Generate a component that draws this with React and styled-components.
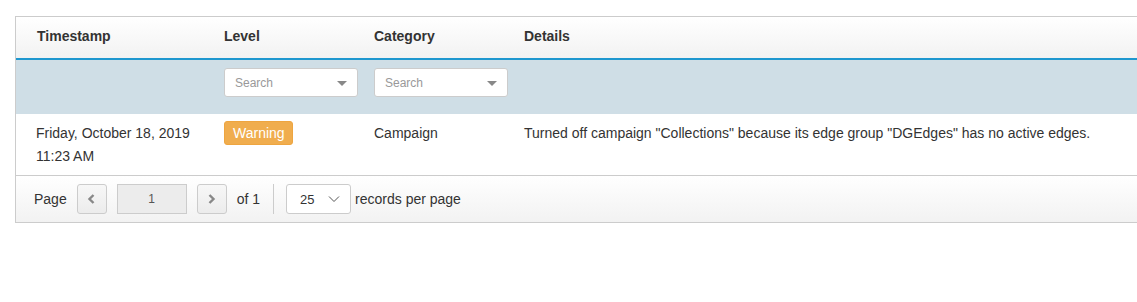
import styled, { createGlobalStyle } from 'styled-components';

const GlobalStyle = createGlobalStyle`
  html, body {
    margin: 0;
    padding: 0;
    overflow: hidden;
    background: #fff;
  }
  body {
    padding: 16px 0 0 15px;
    font-family: 'Liberation Sans', Arial, sans-serif;
    color: #333;
  }
`;

const COLS = '208px 150px 150px 1fr';

const Grid = styled.div`
  width: 1140px;
  border: 1px solid #ccc;
  border-right: none;
  font-size: 14px;
`;

const HeaderRow = styled.div`
  display: grid;
  grid-template-columns: ${COLS};
  height: 41px;
  align-items: center;
  background: linear-gradient(#fff, #f2f2f2);
  border-bottom: 2px solid #1e97cf;
`;

const HeaderCell = styled.div`
  font-size: 14px;
  font-weight: bold;
  color: #333;
  padding-left: ${(p) => (p.$first ? '21px' : '0')};
  margin-top: -3px;
`;

const FilterRow = styled.div`
  display: grid;
  grid-template-columns: ${COLS};
  height: 54px;
  box-sizing: border-box;
  padding-top: 8px;
  align-items: start;
  background: #cfdee6;
`;

const FilterBox = styled.div`
  display: flex;
  align-items: center;
  justify-content: space-between;
  box-sizing: border-box;
  width: 134px;
  height: 29px;
  padding: 0 10px 0 10px;
  background: #fff;
  border: 1px solid #ccc;
  border-radius: 3px;
  font-size: 12px;
  color: #999;
`;

const Caret = styled.span`
  width: 0;
  height: 0;
  margin-top: 2px;
  border-left: 5px solid transparent;
  border-right: 5px solid transparent;
  border-top: 5px solid #888;
`;

const DataRow = styled.div`
  display: grid;
  grid-template-columns: ${COLS};
  padding: 8px 0 7px;
  border-bottom: 1px solid #ccc;
  line-height: 23px;
  color: #333;
`;

const Cell = styled.div`
  padding-left: ${(p) => (p.$first ? '20px' : '0')};
`;

const Badge = styled.span`
  display: inline-block;
  height: 24px;
  line-height: 22px;
  margin-top: -1px;
  padding: 0 7px 0 8px;
  box-sizing: border-box;
  vertical-align: top;
  background: #f0ad4e;
  border: 1px solid #eea540;
  border-radius: 3px;
  color: #fff;
  font-size: 14px;
`;

const Pager = styled.div`
  display: flex;
  align-items: center;
  height: 46px;
  padding-left: 18px;
  background: linear-gradient(#fff, #f2f2f2);
  font-size: 14px;
  color: #333;
`;

const Label = styled.span`
  margin-right: ${(p) => p.$mr || '0'};
`;

const NavButton = styled.button`
  display: flex;
  align-items: center;
  justify-content: center;
  box-sizing: border-box;
  width: 30px;
  height: 30px;
  padding: 0;
  margin: 0 10px 0 0;
  background: linear-gradient(#f7f7f7, #ececec);
  border: 1px solid #ccc;
  border-radius: 3px;
  color: #888;
`;

const PageInput = styled.div`
  box-sizing: border-box;
  width: 70px;
  height: 30px;
  margin-right: 10px;
  line-height: 28px;
  text-align: center;
  background: #ececec;
  border: 1px solid #ccc;
  font-size: 12px;
  color: #555;
`;

const Divider = styled.span`
  width: 1px;
  height: 30px;
  margin: 0 12px 0 13px;
  background: #ccc;
`;

const SizeSelect = styled.div`
  display: flex;
  align-items: center;
  justify-content: space-between;
  box-sizing: border-box;
  width: 65px;
  height: 30px;
  padding: 0 10px 0 13px;
  margin-right: 4px;
  background: #fff;
  border: 1px solid #ccc;
  border-radius: 3px;
  font-size: 13px;
  color: #333;
`;

function Chevron({ dir }) {
  const d = dir === 'left' ? 'M6.5 1 L2.5 5 L6.5 9' : 'M2.5 1 L6.5 5 L2.5 9';
  return (
    <svg width='9' height='10' viewBox='0 0 9 10'>
      <path d={d} fill='none' stroke='#888' strokeWidth='2.4' />
    </svg>
  );
}

function ChevronDown() {
  return (
    <svg width='12' height='8' viewBox='0 0 12 8'>
      <path d='M1 1.5 L6 6.5 L11 1.5' fill='none' stroke='#555' strokeWidth='1' />
    </svg>
  );
}

export default function App() {
  return (
    <>
      <GlobalStyle />
      <Grid>
        <HeaderRow>
          <HeaderCell $first>Timestamp</HeaderCell>
          <HeaderCell>Level</HeaderCell>
          <HeaderCell>Category</HeaderCell>
          <HeaderCell>Details</HeaderCell>
        </HeaderRow>
        <FilterRow>
          <div />
          <FilterBox>
            Search <Caret />
          </FilterBox>
          <FilterBox>
            Search <Caret />
          </FilterBox>
          <div />
        </FilterRow>
        <DataRow>
          <Cell $first>
            Friday, October 18, 2019
            <br />
            11:23 AM
          </Cell>
          <Cell>
            <Badge>Warning</Badge>
          </Cell>
          <Cell>Campaign</Cell>
          <Cell>
            Turned off campaign "Collections" because its edge group "DGEdges" has no active edges.
          </Cell>
        </DataRow>
        <Pager>
          <Label $mr='10px'>Page</Label>
          <NavButton>
            <Chevron dir='left' />
          </NavButton>
          <PageInput>1</PageInput>
          <NavButton>
            <Chevron dir='right' />
          </NavButton>
          <Label>of 1</Label>
          <Divider />
          <SizeSelect>
            25 <ChevronDown />
          </SizeSelect>
          <Label>records per page</Label>
        </Pager>
      </Grid>
    </>
  );
}
